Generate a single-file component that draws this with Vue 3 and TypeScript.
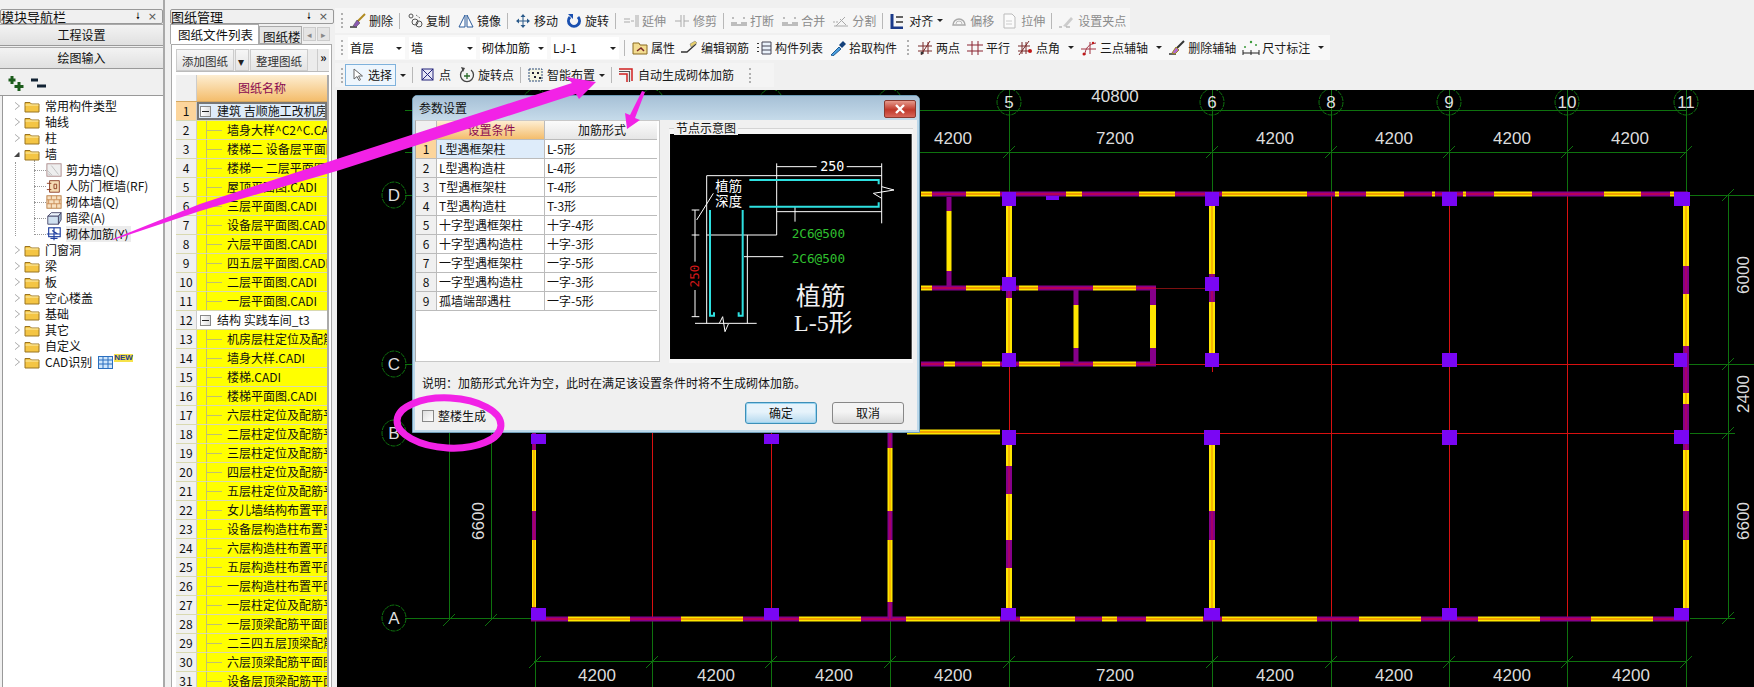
<template>
  <div class="app">
    <aside class="nav">
      <div class="dock-title">模块导航栏<span class="pin">🠗</span><span class="close">×</span></div>
      <div class="nav-btn">工程设置</div>
      <div class="nav-btn">绘图输入</div>
      <div class="tree-tools">
        <svg width="50" height="16" viewBox="0 0 50 16">
          <path d="M5 0v8M1.500 4h7M12 6v9M7.500 10.500h9" stroke="#1c5c1c" stroke-width="3" fill="none" />
          <path d="M24 4h7M30 10h9" stroke="#123" stroke-width="3" fill="none" />
        </svg>
      </div>
      <div class="tree">
        <i class="dots dots-a"></i>
        <i class="dots dots-b"></i>
        <div v-for="n in treeRows" :key="n.label" class="tree-row" :class="{ child: n.child, hot: n.hot }">
          <template v-if="!n.child">
            <span class="tri" :class="{ open: n.open }"></span>
            <svg class="folder" width="16" height="13" viewBox="0 0 16 13">
              <path d="M1 2.500h5l1.500 1.500H15v8H1z" fill="#f4c544" stroke="#9a7420" />
              <path d="M1.500 5h13" stroke="#fdf0b0" />
            </svg>
          </template>
          <template v-else>
            <i class="stub"></i>
            <svg class="leaf" width="16" height="16" viewBox="0 0 18 16" v-html="icons[n.icon || 'brick']"></svg>
          </template>
          <span class="tree-label">{{ n.label }}</span>
          <template v-if="n.isNew">
            <svg class="newicon" width="15" height="13" viewBox="0 0 15 13">
              <rect x=".5" y=".5" width="14" height="12" fill="#cfe6fb" stroke="#2a6fc0" />
              <path d="M5 1v11M10 1v11M1 4h13M1 8h13" stroke="#2a6fc0" />
            </svg>
            <b class="newtag">NEW</b>
          </template>
        </div>
      </div>
    </aside>

    <section class="drawings">
      <div class="dock-title">图纸管理<span class="pin">🠗</span><span class="close">×</span></div>
      <div class="tabs">
        <div class="tab active">图纸文件列表</div>
        <div class="tab cut">图纸楼</div>
        <div class="tab-arrows"><span>◂</span><span>▸</span></div>
      </div>
      <div class="tab-body">
        <div class="mini-bar">
          <span class="mini">添加图纸</span>
          <span class="mini small">▾</span>
          <span class="mini">整理图纸</span>
          <span class="more">»</span>
        </div>
        <div class="sheet">
          <div class="sheet-head"><span class="no"></span><span class="name">图纸名称</span></div>
          <div
            v-for="(row, i) in sheetRows"
            :key="i"
            class="sheet-row"
            :class="{ group: row.group, first: i === 0 }"
          >
            <span class="no">{{ i + 1 }}</span>
            <span class="cell">
              <template v-if="row.group">
                <i class="minus"></i>
              </template>
              <template v-else><i class="branch"></i></template>
              <span class="cell-text">{{ row.text }}</span>
            </span>
          </div>
        </div>
      </div>
    </section>

    <main class="work">
      <div class="bars">
        <div class="bar bar-1">
          <i class="grip"></i>
          <template v-for="(t, i) in row1" :key="i">
            <i v-if="t.sep" class="sep"></i>
            <span v-else class="tool" :class="{ gray: t.gray }">
              <svg width="18" height="16" viewBox="0 0 18 16" v-html="icons[t.icon || '']"></svg>
              <span>{{ t.label }}</span>
              <i v-if="t.arrow" class="caret tight"></i>
            </span>
          </template>
        </div>
        <div class="bar bar-2">
          <i class="grip"></i>
          <span v-for="f in fields" :key="f.label" class="field" :style="{ width: f.w + 'px' }">
            {{ f.label }}<i class="caret"></i>
          </span>
          <i class="sep sep-field"></i>
          <template v-for="(t, i) in row2" :key="i">
            <i v-if="t.sep" class="sep"></i>
            <i v-else-if="t.grip" class="grip grip-mid"></i>
            <span v-else class="tool">
              <svg width="18" height="16" viewBox="0 0 18 16" v-html="icons[t.icon || '']"></svg>
              <span>{{ t.label }}</span>
              <i v-if="t.arrow" class="caret wide"></i>
            </span>
          </template>
        </div>
        <div class="bar bar-3">
          <i class="grip"></i>
          <span class="select-btn">
            <svg width="12" height="14" viewBox="0 0 12 14"><path d="M2 1v10l3-2.500 2 4 1.500-.8-2-3.700h4z" fill="#fff" stroke="#666" /></svg>
            选择
          </span>
          <i class="caret tight"></i>
          <template v-for="(t, i) in row3" :key="i">
            <i v-if="t.sep" class="sep"></i>
            <span v-else class="tool">
              <svg width="18" height="16" viewBox="0 0 18 16" v-html="icons[t.icon || '']"></svg>
              <span>{{ t.label }}</span>
              <i v-if="t.arrow" class="caret tight"></i>
            </span>
          </template>
          <i class="grip grip-end"></i>
        </div>
      </div>

      <div class="canvas">
        <svg class="plan" width="1417" height="597" viewBox="337 90 1417 597">
          <g stroke="#0e720e" fill="none">
            <path v-for="(p, i) in greenLines" :key="i" :d="p" />
          </g>
          <g stroke="#d81010" fill="none">
            <path v-for="(p, i) in redLines" :key="i" :d="p" />
          </g>
          <path d="M1156 288.500H1206" stroke="#7c1010" fill="none" />
          <g v-for="(s, i) in wallRects" :key="'w' + i">
            <rect :x="s.x" :y="s.y" :width="s.w" :height="s.h" :fill="s.fill" />
            <rect v-if="s.core" :x="s.cx" :y="s.cy" :width="s.cw" :height="s.ch" :fill="s.core" />
          </g>
          <rect v-for="(c, i) in columns" :key="'c' + i" :x="c[0]" :y="c[1]" :width="c[2]" :height="c[3]" fill="#7a06f4" />
          <g v-for="b in bubbles" :key="b.t + b.x" class="bubble">
            <ellipse :cx="b.x" :cy="b.y" rx="12" ry="13" fill="none" stroke="#0e720e" stroke-dasharray="5 1" />
            <text :x="b.x" :y="b.y + 6" text-anchor="middle" class="bubble-text">{{ b.t }}</text>
          </g>
          <text v-for="d in dimsH" :key="d.x + '-' + d.y" :x="d.x" :y="d.y" text-anchor="middle" class="dim">{{ d.t }}</text>
          <text
            v-for="d in dimsV"
            :key="d.x + '_' + d.y"
            :transform="`translate(${d.x} ${d.y}) rotate(-90)`"
            text-anchor="middle"
            class="dim"
          >{{ d.t }}</text>
        </svg>

        <div class="dialog">
          <div class="dlg-title">
            <span>参数设置</span>
            <span class="dlg-close">
              <svg width="12" height="10" viewBox="0 0 12 10"><path d="M2 1l8 8M10 1L2 9" stroke="#fff" stroke-width="2.400" /></svg>
            </span>
          </div>
          <div class="dlg-main">
            <div class="param">
              <div class="param-row param-head">
                <span class="pn"></span>
                <span class="pa on">设置条件</span>
                <span class="pb">加筋形式</span>
              </div>
              <div v-for="(r, i) in params" :key="i" class="param-row" :class="{ sel: i === 0 }">
                <span class="pn">{{ i + 1 }}</span>
                <span class="pa">{{ r[0] }}</span>
                <span class="pb">{{ r[1] }}</span>
              </div>
            </div>
            <div class="group-box">
              <span class="legend">节点示意图</span>
              <svg class="node" width="241.700" height="225" viewBox="30 27 725 675">
                <rect x="30" y="27" width="725" height="675" fill="#000" />
                <g stroke="#fff" stroke-width="3" fill="none">
                  <path d="M140 152H665M140 152V595M350 115V330M140 330H350M350 260H665M665 115V295M262 330V595M105 595H290" />
                  <path d="M350 125H470M560 125H665M105 255V410M105 495V575M95 255H118M95 330H118M95 575H118M160 205L110 285M252 395H370M405 245V290" />
                  <path d="M178 595L188 575 195 620 205 597M665 185L702 195 640 205 665 220" />
                </g>
                <g stroke="#2ee0e0" stroke-width="6" fill="none">
                  <path d="M268 165H656V178M268 245H656V232M150 255V572H162V562M248 255V572H236V562" />
                </g>
                <text x="517" y="138" class="n-txt" font-size="40" text-anchor="middle" fill="#fff">250</text>
                <text x="206" y="198" class="n-cjk" font-size="40" text-anchor="middle" fill="#fff">植筋</text>
                <text x="206" y="243" class="n-cjk" font-size="40" text-anchor="middle" fill="#fff">深度</text>
                <text x="475" y="340" class="n-txt" font-size="38" text-anchor="middle" fill="#30c030">2C6@500</text>
                <text x="475" y="415" class="n-txt" font-size="38" text-anchor="middle" fill="#30c030">2C6@500</text>
                <text transform="translate(118 453) rotate(-90)" class="n-txt" font-size="38" text-anchor="middle" fill="#d01818">250</text>
                <text x="482" y="540" class="n-serif" font-size="74" text-anchor="middle" fill="#f0f0f0">植筋</text>
                <text x="490" y="618" class="n-serif" font-size="72" text-anchor="middle" fill="#f0f0f0">L-5形</text>
              </svg>
            </div>
          </div>
          <div class="note">说明：加筋形式允许为空，此时在满足该设置条件时将不生成砌体加筋。</div>
          <div class="dlg-foot">
            <label class="check"><i class="box"></i>整楼生成</label>
            <span class="btn primary">确定</span>
            <span class="btn">取消</span>
          </div>
        </div>
      </div>
    </main>

    <svg class="marks" width="1754" height="687" viewBox="0 0 1754 687">
      <g fill="#f222e6">
        <path d="M113 239L200 204 340 158 572 83 566 77 596 82 579 99 576 94 340 170 200 211 113 240z" />
        <path d="M642 91L645 92 635 118 640 120 627 129 625 113 630 115z" />
      </g>
      <ellipse cx="449" cy="423" rx="52" ry="25" fill="none" stroke="#f222e6" stroke-width="7" transform="rotate(3 449 423)" />
    </svg>
  </div>
</template>

<script setup lang="ts">
interface ToolItem {
  icon?: string
  label?: string
  gray?: boolean
  arrow?: boolean
  sep?: boolean
  grip?: boolean
}
interface TreeRow {
  label: string
  child?: boolean
  open?: boolean
  hot?: boolean
  isNew?: boolean
  icon?: string
}

const icons: Record<string, string> = {
  broom: '<path d="M1 14h7" stroke="#333" stroke-width="1.500"/><path d="M16 1L8 9" stroke="#b08a20" stroke-width="2"/><path d="M4 13l4-6 3 3-4 4z" fill="#8a5ab0" stroke="#444" stroke-width=".5"/>',
  copy: '<circle cx="5" cy="3" r="2" fill="none" stroke="#555"/><circle cx="9" cy="9" r="3" fill="none" stroke="#555"/><circle cx="13" cy="11" r="3" fill="none" stroke="#555"/><path d="M10 2l4 3" stroke="#555" stroke-dasharray="1 1"/>',
  mirror: '<path d="M8 2L2 14h6zM10 2l6 12h-6z" fill="#fff" stroke="#2a5a9a"/>',
  move: '<path d="M9 1l2.500 3h-5zM9 15l2.500-3h-5zM2 8l3-2.500v5zM16 8l-3-2.500v5z" fill="#2a5a8a"/><path d="M9 3v10M3 8h12" stroke="#2a5a8a"/>',
  rotate: '<path d="M13 4a5.500 5.500 0 1 1-8 0" fill="none" stroke="#1a50b0" stroke-width="3"/><path d="M3 1h5v5z" fill="#1a50b0"/>',
  extend: '<path d="M2 6h6M2 9h6M9 8h3M14 2v12M16 2v12" stroke="#aaa"/>',
  trim: '<path d="M2 8h6M11 8h5M8 2v12M11 2v12" stroke="#aaa"/>',
  cut: '<path d="M1 10h6M11 10h6M3 6V4M14 6V4M1 12h16" stroke="#aaa" stroke-width="1.500"/>',
  split: '<path d="M2 13h14M4 13l9-9M8 6l6 6" stroke="#aaa"/><path d="M1 9h6" stroke="#aaa" stroke-dasharray="2 1"/>',
  align: '<path d="M3 1v14h11" stroke="#1a3a8a" stroke-width="3" fill="none"/><path d="M7 4h7M7 9h7" stroke="#333" stroke-width="1.500"/>',
  offset: '<path d="M3 12a6 6 0 1 1 12 0z" fill="none" stroke="#aaa" stroke-width="1.500"/><path d="M6 11a3 3 0 0 1 6 0" fill="none" stroke="#bbb"/>',
  stretch: '<path d="M3 1h8l3 3v11H3z" fill="#fbfbfb" stroke="#bbb"/><path d="M5 8h6M5 11h6" stroke="#ccc"/>',
  grippt: '<path d="M5 13l8-9 2 2-7 8z" fill="#ccc"/><path d="M1 14h3M8 14h4" stroke="#999"/>',
  attr: '<path d="M2 3h6l1 2h7v9H2z" fill="#f3dc90" stroke="#8a6a20"/><path d="M6 11l4-3 3 3" stroke="#7a2a2a" fill="none" stroke-width="1.500"/>',
  rebar: '<path d="M0 12h6l9-8" stroke="#333" stroke-width="1.300" fill="none"/><path d="M9 4l5-3 2 2-6 4z" fill="#e6cf6a" stroke="#777" stroke-width=".5"/>',
  list: '<path d="M3 3v1M3 7v1M3 11v1" stroke="#333" stroke-width="2"/><path d="M7 2h9v12H7z" fill="#eaf2fb" stroke="#445"/><path d="M7 6h9M7 10h9" stroke="#445"/>',
  dropper: '<path d="M2 15l8-8 2 2-8 7z" fill="#4aa0e0" stroke="#205a90"/><path d="M10 5l4-4 3 3-4 4z" fill="#14407a"/>',
  twopt: '<path d="M2 6h14M2 11h14M5 15L14 1M7 2v12M12 2v12" stroke="#7a2a2a"/><circle cx="6" cy="13" r="1.500" fill="#333"/>',
  parallel: '<path d="M1 5h16M1 11h16M6 1v14M12 1v14" stroke="#8a2430"/>',
  angle: '<path d="M2 6h12M2 11h12M3 15L13 1M6 2v12M10 2v12" stroke="#7a2a2a"/><circle cx="14" cy="11" r="2" fill="#c01818"/>',
  arc: '<path d="M5 15C5 8 9 4 16 3M1 9h15M10 2v12" stroke="#a03040" fill="none"/><circle cx="4" cy="14" r="1.500" fill="#c01818"/><circle cx="13" cy="3" r="1.200" fill="#c01818"/>',
  clean: '<path d="M1 14h7" stroke="#333" stroke-width="1.500"/><path d="M16 1L8 9" stroke="#333" stroke-width="2"/><path d="M4 13l4-6 3 3-4 4z" fill="#b06ad0" stroke="#a08a20"/>',
  dim: '<path d="M1 10v5M9 10v5M17 10v5M1 13h16" stroke="#222"/><circle cx="3" cy="7" r="1" fill="#3a9a3a"/><circle cx="9" cy="2" r="1.200" fill="#3a9a3a"/><circle cx="14" cy="5" r="1" fill="#3a9a3a"/>',
  point: '<rect x="3" y="2" width="11" height="11" fill="#e6e6f6" stroke="#23237a"/><path d="M3 2l11 11M14 2L3 13" stroke="#23237a"/>',
  rotpt: '<path d="M13 3a6.500 6.500 0 1 1-8 0" fill="none" stroke="#444" stroke-width="1.300"/><path d="M3 0l4 1-2 4z" fill="#444"/><path d="M9 6v6M6 9h6" stroke="#2a6a2a" stroke-width="1.300"/>',
  smart: '<rect x="2" y="2" width="13" height="12" fill="#f4f4e0" stroke="#2a4a7a" stroke-dasharray="2 1"/><path d="M5 5h2v2H5zM10 5h2v2h-2zM7 9h2v2H7zM12 10h2v2h-2z" fill="#223"/>',
  auto: '<path d="M1 2h13v12" fill="none" stroke="#d02020" stroke-width="1.500"/><path d="M1 4.500h10.500V15" fill="none" stroke="#555" stroke-width="1.200"/><path d="M1 7h8v8" fill="none" stroke="#d02020" stroke-width="1.500"/>',
  shear: '<rect x="1" y="1" width="16" height="14" fill="#eee" stroke="#a88"/><path d="M1 8l6 6M6 3l8 10M2 12l3 2" stroke="#bbb"/>',
  door: '<path d="M4 2h11v13H4z" fill="#f5dcb4" stroke="#8a3a20"/><path d="M1 5h5M1 12h5M9 6h3v5H9z" stroke="#8a3a20" fill="none"/>',
  brick: '<rect x="1" y="1" width="16" height="14" fill="#f7e0c0" stroke="#b87a40"/><path d="M1 5.500h16M1 10h16M6 1v4M12 1v4M3 5.500V10M9 5.500V10M15 5.500V10M6 10v5M12 10v5" stroke="#c88850"/>',
  beam: '<path d="M2 6l4-4h11l-3 4z" fill="#eaf2fb" stroke="#446"/><path d="M2 6h12v9H2z" fill="#cfe0f0" stroke="#446"/><path d="M14 6l3-4v8l-3 5z" fill="#9fb8d0" stroke="#446"/>',
  mesh: '<rect x="3" y="1" width="13" height="10" fill="none" stroke="#2040a0" stroke-width="1.300"/><path d="M1 8h15M7 4l6 4M9 1v14M5 13h8" stroke="#2040a0" stroke-width="1.300"/>',
}

const treeRows: TreeRow[] = [
  { label: '常用构件类型' },
  { label: '轴线' },
  { label: '柱' },
  { label: '墙', open: true },
  { label: '剪力墙(Q)', child: true, icon: 'shear' },
  { label: '人防门框墙(RF)', child: true, icon: 'door' },
  { label: '砌体墙(Q)', child: true, icon: 'brick' },
  { label: '暗梁(A)', child: true, icon: 'beam' },
  { label: '砌体加筋(Y)', child: true, icon: 'mesh', hot: true },
  { label: '门窗洞' },
  { label: '梁' },
  { label: '板' },
  { label: '空心楼盖' },
  { label: '基础' },
  { label: '其它' },
  { label: '自定义' },
  { label: 'CAD识别', isNew: true },
]

const sheetRows = [
  { text: '建筑  吉顺施工改机房', group: true },
  { text: '墙身大样^C2^C.CADI' },
  { text: '楼梯二  设备层平面图' },
  { text: '楼梯一  二层平面图' },
  { text: '屋顶平面图.CADI' },
  { text: '三层平面图.CADI' },
  { text: '设备层平面图.CADI' },
  { text: '六层平面图.CADI' },
  { text: '四五层平面图.CADI' },
  { text: '二层平面图.CADI' },
  { text: '一层平面图.CADI' },
  { text: '结构  实践车间_t3', group: true },
  { text: '机房层柱定位及配筋平面图' },
  { text: '墙身大样.CADI' },
  { text: '楼梯.CADI' },
  { text: '楼梯平面图.CADI' },
  { text: '六层柱定位及配筋平面图' },
  { text: '二层柱定位及配筋平面图' },
  { text: '三层柱定位及配筋平面图' },
  { text: '四层柱定位及配筋平面图' },
  { text: '五层柱定位及配筋平面图' },
  { text: '女儿墙结构布置平面图' },
  { text: '设备层构造柱布置平面图' },
  { text: '六层构造柱布置平面图' },
  { text: '五层构造柱布置平面图' },
  { text: '一层构造柱布置平面图' },
  { text: '一层柱定位及配筋平面图' },
  { text: '一层顶梁配筋平面图' },
  { text: '二三四五层顶梁配筋平面图' },
  { text: '六层顶梁配筋平面图' },
  { text: '设备层顶梁配筋平面图' },
]

const row1: ToolItem[] = [
  { icon: 'broom', label: '删除' },
  { sep: true },
  { icon: 'copy', label: '复制' },
  { icon: 'mirror', label: '镜像' },
  { sep: true },
  { icon: 'move', label: '移动' },
  { icon: 'rotate', label: '旋转' },
  { sep: true },
  { icon: 'extend', label: '延伸', gray: true },
  { icon: 'trim', label: '修剪', gray: true },
  { sep: true },
  { icon: 'cut', label: '打断', gray: true },
  { icon: 'cut', label: '合并', gray: true },
  { icon: 'split', label: '分割', gray: true },
  { sep: true },
  { icon: 'align', label: '对齐', arrow: true },
  { icon: 'offset', label: '偏移', gray: true },
  { icon: 'stretch', label: '拉伸', gray: true },
  { sep: true },
  { icon: 'grippt', label: '设置夹点', gray: true },
]

const fields = [
  { label: '首层', w: 57 },
  { label: '墙', w: 67 },
  { label: '砌体加筋', w: 67 },
  { label: 'LJ-1', w: 68 },
]

const row2: ToolItem[] = [
  { icon: 'attr', label: '属性' },
  { icon: 'rebar', label: '编辑钢筋' },
  { icon: 'list', label: '构件列表' },
  { icon: 'dropper', label: '拾取构件' },
  { grip: true },
  { icon: 'twopt', label: '两点' },
  { icon: 'parallel', label: '平行' },
  { icon: 'angle', label: '点角', arrow: true },
  { icon: 'arc', label: '三点辅轴', arrow: true },
  { icon: 'clean', label: '删除辅轴' },
  { icon: 'dim', label: '尺寸标注', arrow: true },
]

const row3: ToolItem[] = [
  { sep: true },
  { icon: 'point', label: '点' },
  { icon: 'rotpt', label: '旋转点' },
  { sep: true },
  { icon: 'smart', label: '智能布置', arrow: true },
  { sep: true },
  { icon: 'auto', label: '自动生成砌体加筋' },
]

const params = [
  ['L型遇框架柱', 'L-5形'],
  ['L型遇构造柱', 'L-4形'],
  ['T型遇框架柱', 'T-4形'],
  ['T型遇构造柱', 'T-3形'],
  ['十字型遇框架柱', '十字-4形'],
  ['十字型遇构造柱', '十字-3形'],
  ['一字型遇框架柱', '一字-5形'],
  ['一字型遇构造柱', '一字-3形'],
  ['孤墙端部遇柱', '一字-5形'],
]

// plan drawing, page coordinates
const topX = [535, 652.5, 771, 890, 1009, 1212, 1331, 1449, 1567, 1686]
const tick = (x: number, y: number) => `M${x - 6} ${y + 6}L${x + 6} ${y - 6}`
const greenLines: string[] = [
  'M405 110.500H1686',
  'M405 152.500H1686',
  'M405 195.500H413',
  'M405 364.500H413',
  'M405 618.500H535',
  'M1688 195.500H1754',
  'M1688 364.500H1754',
  'M1690 433.500H1735',
  'M1690 618.500H1735',
  'M1728.500 195V618',
  'M449.500 433V618',
  'M491.500 433V618',
  'M534 661.500H1686',
  ...[1009, 1212, 1331, 1449, 1567, 1686].map((x) => `M${x + 0.5} 90V195`),
  ...[535, 652, 771, 890, 1009, 1212, 1331, 1449, 1567, 1686].map((x) => `M${x + 0.5} 619V687`),
  ...topX.slice(4).map((x) => tick(x, 152)),
  ...[535, 652, 771, 890, 1009, 1212, 1331, 1449, 1567, 1686].map((x) => tick(x, 662)),
  ...[195, 364, 433, 618].map((y) => tick(1728, y)),
  tick(449, 620),
  tick(491, 620),
]
const redLines: string[] = [
  'M1156 364.500H1686',
  'M1009 433.500H1686',
  'M1009.500 364V433',
  'M652.500 433V619',
  'M771.500 433V619',
  'M1331.500 195V619',
  'M1449.500 195V619',
  'M1567.500 195V619',
  'M1212.500 364V372',
]

const YELLOW = '#ffe600'
const PURPLE = '#86008a'
type Run = [number, number[], boolean?]

function buildWalls() {
  const rects: {
    x: number; y: number; w: number; h: number; fill: string
    core?: string; cx?: number; cy?: number; cw?: number; ch?: number
  }[] = []
  // stops alternate yellow / purple, the flag says the first stretch is purple
  const hRuns: Run[] = [
    [194, [921, 932, 966, 1000, 1066, 1082, 1139, 1175, 1222, 1307, 1335, 1339, 1366, 1404, 1432, 1435, 1463, 1466, 1494, 1532, 1604, 1641, 1670, 1674, 1688]],
    [288, [921, 932, 966, 1000, 1019, 1038, 1093, 1136, 1156]],
    [364, [921, 944, 955, 982, 1000, 1019, 1060, 1093, 1136, 1156], true],
    [432, [907, 1000]],
    [619, [531, 568, 630, 681, 743, 799, 861, 906, 1000, 1020, 1075, 1102, 1117, 1146, 1203, 1222, 1317, 1359, 1421, 1478, 1540, 1591, 1653, 1689], true],
  ]
  for (const [y, stops, purple] of hRuns) {
    for (let i = 0; i < stops.length - 1; i++) {
      const isP = i % 2 === 0 ? !!purple : !purple
      rects.push({
        x: stops[i], y: y - 2.5, w: stops[i + 1] - stops[i], h: 5,
        fill: isP ? PURPLE : YELLOW,
        core: isP ? '#c80048' : '#f08a00',
        cx: stops[i], cy: y - 0.75, cw: stops[i + 1] - stops[i], ch: 1.5,
      })
    }
  }
  const vRuns: [number, number, number[], boolean?, boolean?][] = [
    [534, 4, [433, 450, 511, 540, 607, 619], true, true],
    [890, 5, [433, 448, 511, 540, 602, 619], true, true],
    [1009, 6, [206, 277, 298, 353], false, true],
    [1009, 6, [445, 466, 494, 540, 568, 608], false, true],
    [949, 5, [197, 211, 271, 287], true],
    [1076, 5, [290, 305, 348, 364], true],
    [1153, 6, [290, 305, 348, 364], true],
    [1212, 6, [206, 274, 302, 353], false, true],
    [1212, 6, [445, 511, 540, 608], false, true],
    [1686, 6, [206, 266, 294, 346, 393, 404, 450, 511, 540, 608], false, true],
  ]
  for (const [x, w, stops, purple, core] of vRuns) {
    for (let i = 0; i < stops.length - 1; i++) {
      const isP = i % 2 === 0 ? !!purple : !purple
      rects.push({
        x: x - w / 2, y: stops[i], w, h: stops[i + 1] - stops[i],
        fill: isP ? PURPLE : YELLOW,
        core: core ? (isP ? '#c80048' : '#f08a00') : undefined,
        cx: x - 0.5, cy: stops[i], cw: 1, ch: stops[i + 1] - stops[i],
      })
    }
  }
  return rects
}
const wallRects = buildWalls()

const columns: number[][] = [
  [1002, 192, 14, 14], [1205, 192, 14, 14], [1442, 192, 15, 14], [1674, 192, 16, 14], [1046, 196, 13, 4],
  [1002, 277, 14, 14], [1205, 277, 14, 14],
  [1002, 353, 14, 14], [1205, 353, 14, 14], [1442, 353, 15, 14], [1674, 353, 13, 14],
  [531, 434, 15, 10], [764, 434, 15, 10],
  [1002, 430, 14, 15], [1204, 430, 16, 15], [1442, 430, 15, 15], [1674, 430, 15, 14],
  [531, 608, 15, 12], [764, 608, 15, 12], [1001, 608, 15, 12], [1204, 608, 16, 12], [1442, 608, 15, 12], [1674, 608, 15, 12],
]

const bubbles = [
  { x: 535, y: 102, t: '' }, { x: 652, y: 102, t: '' }, { x: 771, y: 102, t: '' }, { x: 890, y: 102, t: '' },
  { x: 1009, y: 102, t: '5' }, { x: 1212, y: 102, t: '6' }, { x: 1331, y: 102, t: '8' },
  { x: 1449, y: 102, t: '9' }, { x: 1567, y: 102, t: '10' }, { x: 1686, y: 102, t: '11' },
  { x: 394, y: 195, t: 'D' }, { x: 394, y: 364, t: 'C' }, { x: 394, y: 433, t: 'B' }, { x: 394, y: 618, t: 'A' },
]

const dimsH = [
  { x: 1115, y: 102, t: '40800' },
  { x: 953, y: 144, t: '4200' }, { x: 1115, y: 144, t: '7200' }, { x: 1275, y: 144, t: '4200' },
  { x: 1394, y: 144, t: '4200' }, { x: 1512, y: 144, t: '4200' }, { x: 1630, y: 144, t: '4200' },
  { x: 597, y: 681, t: '4200' }, { x: 716, y: 681, t: '4200' }, { x: 834, y: 681, t: '4200' }, { x: 953, y: 681, t: '4200' },
  { x: 1115, y: 681, t: '7200' }, { x: 1275, y: 681, t: '4200' }, { x: 1394, y: 681, t: '4200' },
  { x: 1512, y: 681, t: '4200' }, { x: 1631, y: 681, t: '4200' },
]
const dimsV = [
  { x: 484, y: 521, t: '6600' },
  { x: 1749, y: 275, t: '6000' },
  { x: 1749, y: 394, t: '2400' },
  { x: 1749, y: 521, t: '6600' },
]
</script>

<style>
html,
body {
  margin: 0;
  background: #f0f0f0;
  overflow: hidden;
}
</style>

<style scoped>
.app {
  position: relative;
  display: flex;
  width: 1754px;
  height: 687px;
  overflow: hidden;
  background: #f0f0f0;
  color: #111;
  font: 12px/16px "Noto Sans CJK SC", "Liberation Sans", sans-serif;
}
i {
  font-style: normal;
}
.nav {
  display: flex;
  flex-direction: column;
  width: 165px;
  flex: none;
  padding-top: 9px;
  margin-right: 5px;
  box-sizing: border-box;
  border-right: 2px solid #a9a9a9;
}
.dock-title {
  position: relative;
  height: 13px;
  line-height: 13px;
  font-size: 13px;
  border: 1px solid #999;
  border-radius: 2px;
  background: #f0f0f0;
}
.pin {
  position: absolute;
  right: 22px;
  top: 0;
  font-size: 9px;
  font-family: "DejaVu Sans", sans-serif;
}
.close {
  position: absolute;
  right: 5px;
  top: 0;
  color: #555;
  font-family: "DejaVu Sans", sans-serif;
  font-size: 11px;
}
.nav-btn {
  height: 20px;
  margin-bottom: 1px;
  line-height: 20px;
  text-align: center;
  background: linear-gradient(#f3f3f3, #e0e0e0);
  border-top: 1px solid #aaa;
  border-bottom: 1px solid #999;
}
.tree-tools {
  height: 26px;
  padding: 6px 0 0 7px;
  box-sizing: border-box;
  border-bottom: 1px solid #999;
}
.tree {
  position: relative;
  flex: 1;
  padding-top: 2px;
  background: #fff;
  margin-left: 2px;
  border-left: 1px solid #999;
}
.tree-row {
  position: relative;
  display: flex;
  align-items: center;
  height: 16px;
  padding-left: 11px;
}
.tri {
  width: 0;
  height: 0;
  margin-right: 5px;
  border-left: 5px solid #fff;
  border-top: 4px solid transparent;
  border-bottom: 4px solid transparent;
  filter: drop-shadow(1px 0 0 #999);
}
.tri.open {
  border: 0;
  border-bottom: 5px solid #444;
  border-left: 5px solid transparent;
}
.folder {
  margin-right: 5px;
}
.tree-row.child {
  padding-left: 31px;
}
.stub {
  width: 12px;
  border-top: 1px dotted #999;
}
.leaf {
  margin-right: 4px;
  flex: none;
}
.tree-label {
  white-space: nowrap;
}
.hot .tree-label {
  background: #ececec;
  padding-right: 2px;
}
.dots {
  position: absolute;
  border-left: 1px dotted #999;
}
.dots-a {
  left: 12px;
  top: 66px;
  height: 74px;
}
.dots-b {
  left: 31px;
  top: 64px;
  height: 72px;
}
.newicon {
  margin-left: 6px;
}
.newtag {
  margin: -8px 0 0 1px;
  font: bold 8px/8px "Liberation Sans", sans-serif;
  background: #f6e24a;
  color: #243a90;
}
.drawings {
  display: flex;
  flex-direction: column;
  width: 164px;
  flex: none;
  padding-top: 9px;
  box-sizing: border-box;
}
.tabs {
  display: flex;
  height: 20px;
}
.tab {
  padding: 2px 0 0 7px;
  font-size: 12.500px;
  overflow: hidden;
  white-space: nowrap;
}
.tab.active {
  width: 80px;
  background: #fff;
  border: 1px solid #aaa;
  border-bottom: 0;
}
.tab.cut {
  width: 38px;
  margin-top: 2px;
  border: 1px solid #aaa;
  background: #e6e6e6;
  padding-left: 3px;
}
.tab-arrows {
  display: flex;
  gap: 1px;
  margin: 3px 0 0 1px;
}
.tab-arrows span {
  width: 13px;
  height: 14px;
  text-align: center;
  line-height: 14px;
  font-size: 9px;
  color: #888;
  background: #e4e4e4;
  border: 1px solid #ccc;
  box-sizing: border-box;
}
.tab-body {
  flex: 1;
  margin: 0 2px 0 1px;
  padding: 4px 2px 0 4px;
  border: 1px solid #aaa;
  border-bottom: 0;
  background: #fff;
  overflow: hidden;
}
.mini-bar {
  display: flex;
  gap: 1px;
  height: 22px;
  background: #ececec;
  border-bottom: 1px solid #bbb;
}
.mini {
  padding: 3px 5px 0;
  background: linear-gradient(#f6f6f6, #e4e4e4);
  border: 1px solid #ccc;
  color: #333;
  font-size: 11.500px;
  white-space: nowrap;
}
.mini.small {
  padding: 3px 2px 0;
  width: 8px;
  color: #222;
}
.more {
  margin-left: auto;
  width: 11px;
  text-align: center;
  font-weight: bold;
  border-left: 1px solid #ccc;
}
.sheet {
  margin-top: 3px;
  width: 151px;
  border-right: 2px solid #aaa;
  overflow: hidden;
}
.sheet-head {
  display: flex;
  height: 26px;
  line-height: 26px;
  border-bottom: 1px solid #d6a860;
}
.sheet-head .no {
  background: #f0f0f0;
}
.sheet-head .name {
  flex: 1;
  text-align: center;
  color: #8a0a50;
  background: linear-gradient(#fdeed2, #f4bd6c);
}
.sheet-row {
  display: flex;
  height: 19px;
  line-height: 18px;
  box-sizing: border-box;
  border-bottom: 1px solid #d9d9b0;
}
.no {
  width: 21px;
  flex: none;
  text-align: center;
  background: #f0f0f0;
  border-right: 1px solid #ccc;
  box-sizing: border-box;
}
.first .no {
  background: #fcd59c;
}
.cell {
  position: relative;
  display: flex;
  flex: 1;
  overflow: hidden;
  white-space: nowrap;
  background: #ffff00;
}
.group .cell {
  background: #fff;
}
.first .cell {
  background: #deecfa;
  outline: 2px solid #777;
  outline-offset: -2px;
}
.branch {
  position: relative;
  width: 30px;
  flex: none;
}
.branch::before {
  content: "";
  position: absolute;
  left: 9px;
  top: -1px;
  height: 20px;
  border-left: 1px solid #c0c070;
}
.branch::after {
  content: "";
  position: absolute;
  left: 9px;
  top: 9px;
  width: 16px;
  border-top: 1px solid #c0c070;
}
.minus {
  width: 9px;
  height: 9px;
  flex: none;
  margin: 4px 6px 0 3px;
  background: linear-gradient(90deg, #fff, #ddd);
  border: 1px solid #888;
  position: relative;
}
.minus::after {
  content: "";
  position: absolute;
  left: 1px;
  right: 1px;
  top: 4px;
  border-top: 1px solid #222;
}
.work {
  flex: 1;
  display: flex;
  flex-direction: column;
  min-width: 0;
  margin-left: 1px;
}
.bars {
  height: 90px;
  flex: none;
  padding-top: 8px;
  box-sizing: border-box;
}
.bar {
  display: flex;
  align-items: center;
  gap: 7px;
  width: max-content;
  height: 25px;
  padding-left: 6px;
  padding-right: 4px;
  background: #f6f6f6;
}
.bar-2 {
  margin-top: 2px;
  gap: 6px;
  padding-right: 6px;
  background: #f8f8f8;
}
.bar-3 {
  margin-top: 3px;
  height: 24px;
  padding-right: 24px;
  background: #f4f4f4;
}
.grip {
  width: 0;
  height: 15px;
  margin-right: -1px;
  border-left: 2px dotted #b0b0b0;
}
.grip-mid {
  margin: 0 1px 0 4px;
}
.grip-end {
  margin-left: 8px;
}
.sep {
  width: 1px;
  height: 16px;
  margin: 0 -1px;
  background: #b8b8b8;
}
.sep-field {
  margin: 0 0 0 1px;
}
.tool {
  display: flex;
  align-items: center;
  gap: 2px;
  white-space: nowrap;
  color: #1a1a1a;
}
.tool.gray {
  color: #8c8c8c;
}
.caret {
  display: inline-block;
  width: 0;
  height: 0;
  border-left: 3px solid transparent;
  border-right: 3px solid transparent;
  border-top: 3px solid #222;
}
.caret.tight {
  margin-left: 2px;
}
.caret.wide {
  margin-left: 6px;
}
.field {
  position: relative;
  height: 22px;
  line-height: 22px;
  padding-left: 2px;
  box-sizing: border-box;
  background: #fff;
  margin-right: -2px;
}
.field .caret {
  position: absolute;
  right: 3px;
  top: 10px;
}
.select-btn {
  display: flex;
  align-items: center;
  gap: 4px;
  width: 51px;
  height: 22px;
  padding-left: 6px;
  box-sizing: border-box;
  margin: 0 -5px 0 -4px;
  background: #eef6fd;
  border: 1px solid #7fb2dc;
}
.canvas {
  position: relative;
  flex: 1;
  margin-left: 2px;
  background: #000;
  overflow: hidden;
}
.plan {
  display: block;
}
.bubble-text {
  fill: #ddd;
  font: 17px "Liberation Sans", sans-serif;
}
.dim {
  fill: #dcdcdc;
  font: 17px "Liberation Sans", sans-serif;
}
.dialog {
  position: absolute;
  left: 75px;
  top: 5px;
  width: 508px;
  height: 338px;
  box-sizing: border-box;
  border: 1px solid #6f9db8;
  border-radius: 5px 5px 0 0;
  background: #f0f0f0;
  box-shadow: inset 0 0 0 2px #bcd8ea;
}
.dlg-title {
  display: flex;
  align-items: center;
  justify-content: space-between;
  height: 24px;
  padding: 0 3px 0 6px;
  border-radius: 4px 4px 0 0;
  background: linear-gradient(#a6c0d6, #c6dbea);
}
.dlg-close {
  display: flex;
  align-items: center;
  justify-content: center;
  width: 30px;
  height: 16px;
  margin-top: 1px;
  border: 1px solid #8a3a30;
  border-radius: 2px;
  background: linear-gradient(#e69a8c, #c0392b 55%, #d8665a);
}
.dlg-main {
  display: flex;
  padding: 0 0 0 2px;
}
.param {
  width: 245px;
  height: 242px;
  flex: none;
  box-sizing: border-box;
  background: #fff;
  border: 1px solid #c8c8c8;
  border-left-color: #aaa;
}
.param-row {
  display: flex;
  height: 19px;
  line-height: 18px;
  box-sizing: border-box;
  width: 241px;
  border-bottom: 1px solid #bbb;
}
.param-head {
  text-align: center;
  background: linear-gradient(#fbfbfb, #e6e6e6);
}
.pn {
  width: 21px;
  flex: none;
  text-align: center;
  background: #f0f0f0;
  border-right: 1px solid #bbb;
  box-sizing: border-box;
}
.pa {
  width: 108px;
  flex: none;
  padding-left: 2px;
  box-sizing: border-box;
  border-right: 1px solid #bbb;
  white-space: nowrap;
}
.pa.on {
  color: #8a0a50;
  background: linear-gradient(#fdeed2, #f4bd6c);
}
.pb {
  flex: 1;
  padding-left: 2px;
}
.sel .pn {
  background: #fcd59c;
}
.sel .pa {
  background: #deecfa;
}
.group-box {
  position: relative;
  width: 244px;
  height: 234px;
  margin: 8px 0 0 9px;
  padding: 0;
  border-top: 1px solid #d4d4d4;
  background: #f6f6f6;
}
.legend {
  position: absolute;
  left: 5px;
  top: -8px;
  padding: 0 2px;
  background: #f0f0f0;
  line-height: 14px;
}
.node {
  display: block;
  margin: 5px 0 0 1px;
}
.n-txt {
  font-family: "DejaVu Sans Mono", "Liberation Mono", monospace;
}
.n-cjk {
  font-family: "Noto Sans CJK SC", sans-serif;
}
.n-serif {
  font-family: "Liberation Serif", "Noto Sans CJK SC", serif;
}
.note {
  padding: 12px 0 0 9px;
  line-height: 16px;
  letter-spacing: 0;
}
.dlg-foot {
  display: flex;
  align-items: center;
  gap: 15px;
  height: 22px;
  margin-top: 11px;
  padding-right: 15px;
}
.check {
  display: flex;
  align-items: center;
  gap: 4px;
  margin: 6px auto 0 9px;
}
.box {
  width: 12px;
  height: 12px;
  box-sizing: border-box;
  border: 1px solid #888;
  background: linear-gradient(135deg, #ddd, #fff);
}
.btn {
  width: 72px;
  height: 22px;
  line-height: 20px;
  text-align: center;
  box-sizing: border-box;
  border: 1px solid #888;
  border-radius: 3px;
  background: linear-gradient(#f4f4f4 45%, #d8d8d8);
}
.btn.primary {
  border-color: #3c8fb8;
  background: linear-gradient(#e6f3fb 45%, #b4d8ee);
  box-shadow: inset 0 0 0 1px #9ad4f0;
}
.marks {
  position: absolute;
  left: 0;
  top: 0;
  pointer-events: none;
}
</style>
